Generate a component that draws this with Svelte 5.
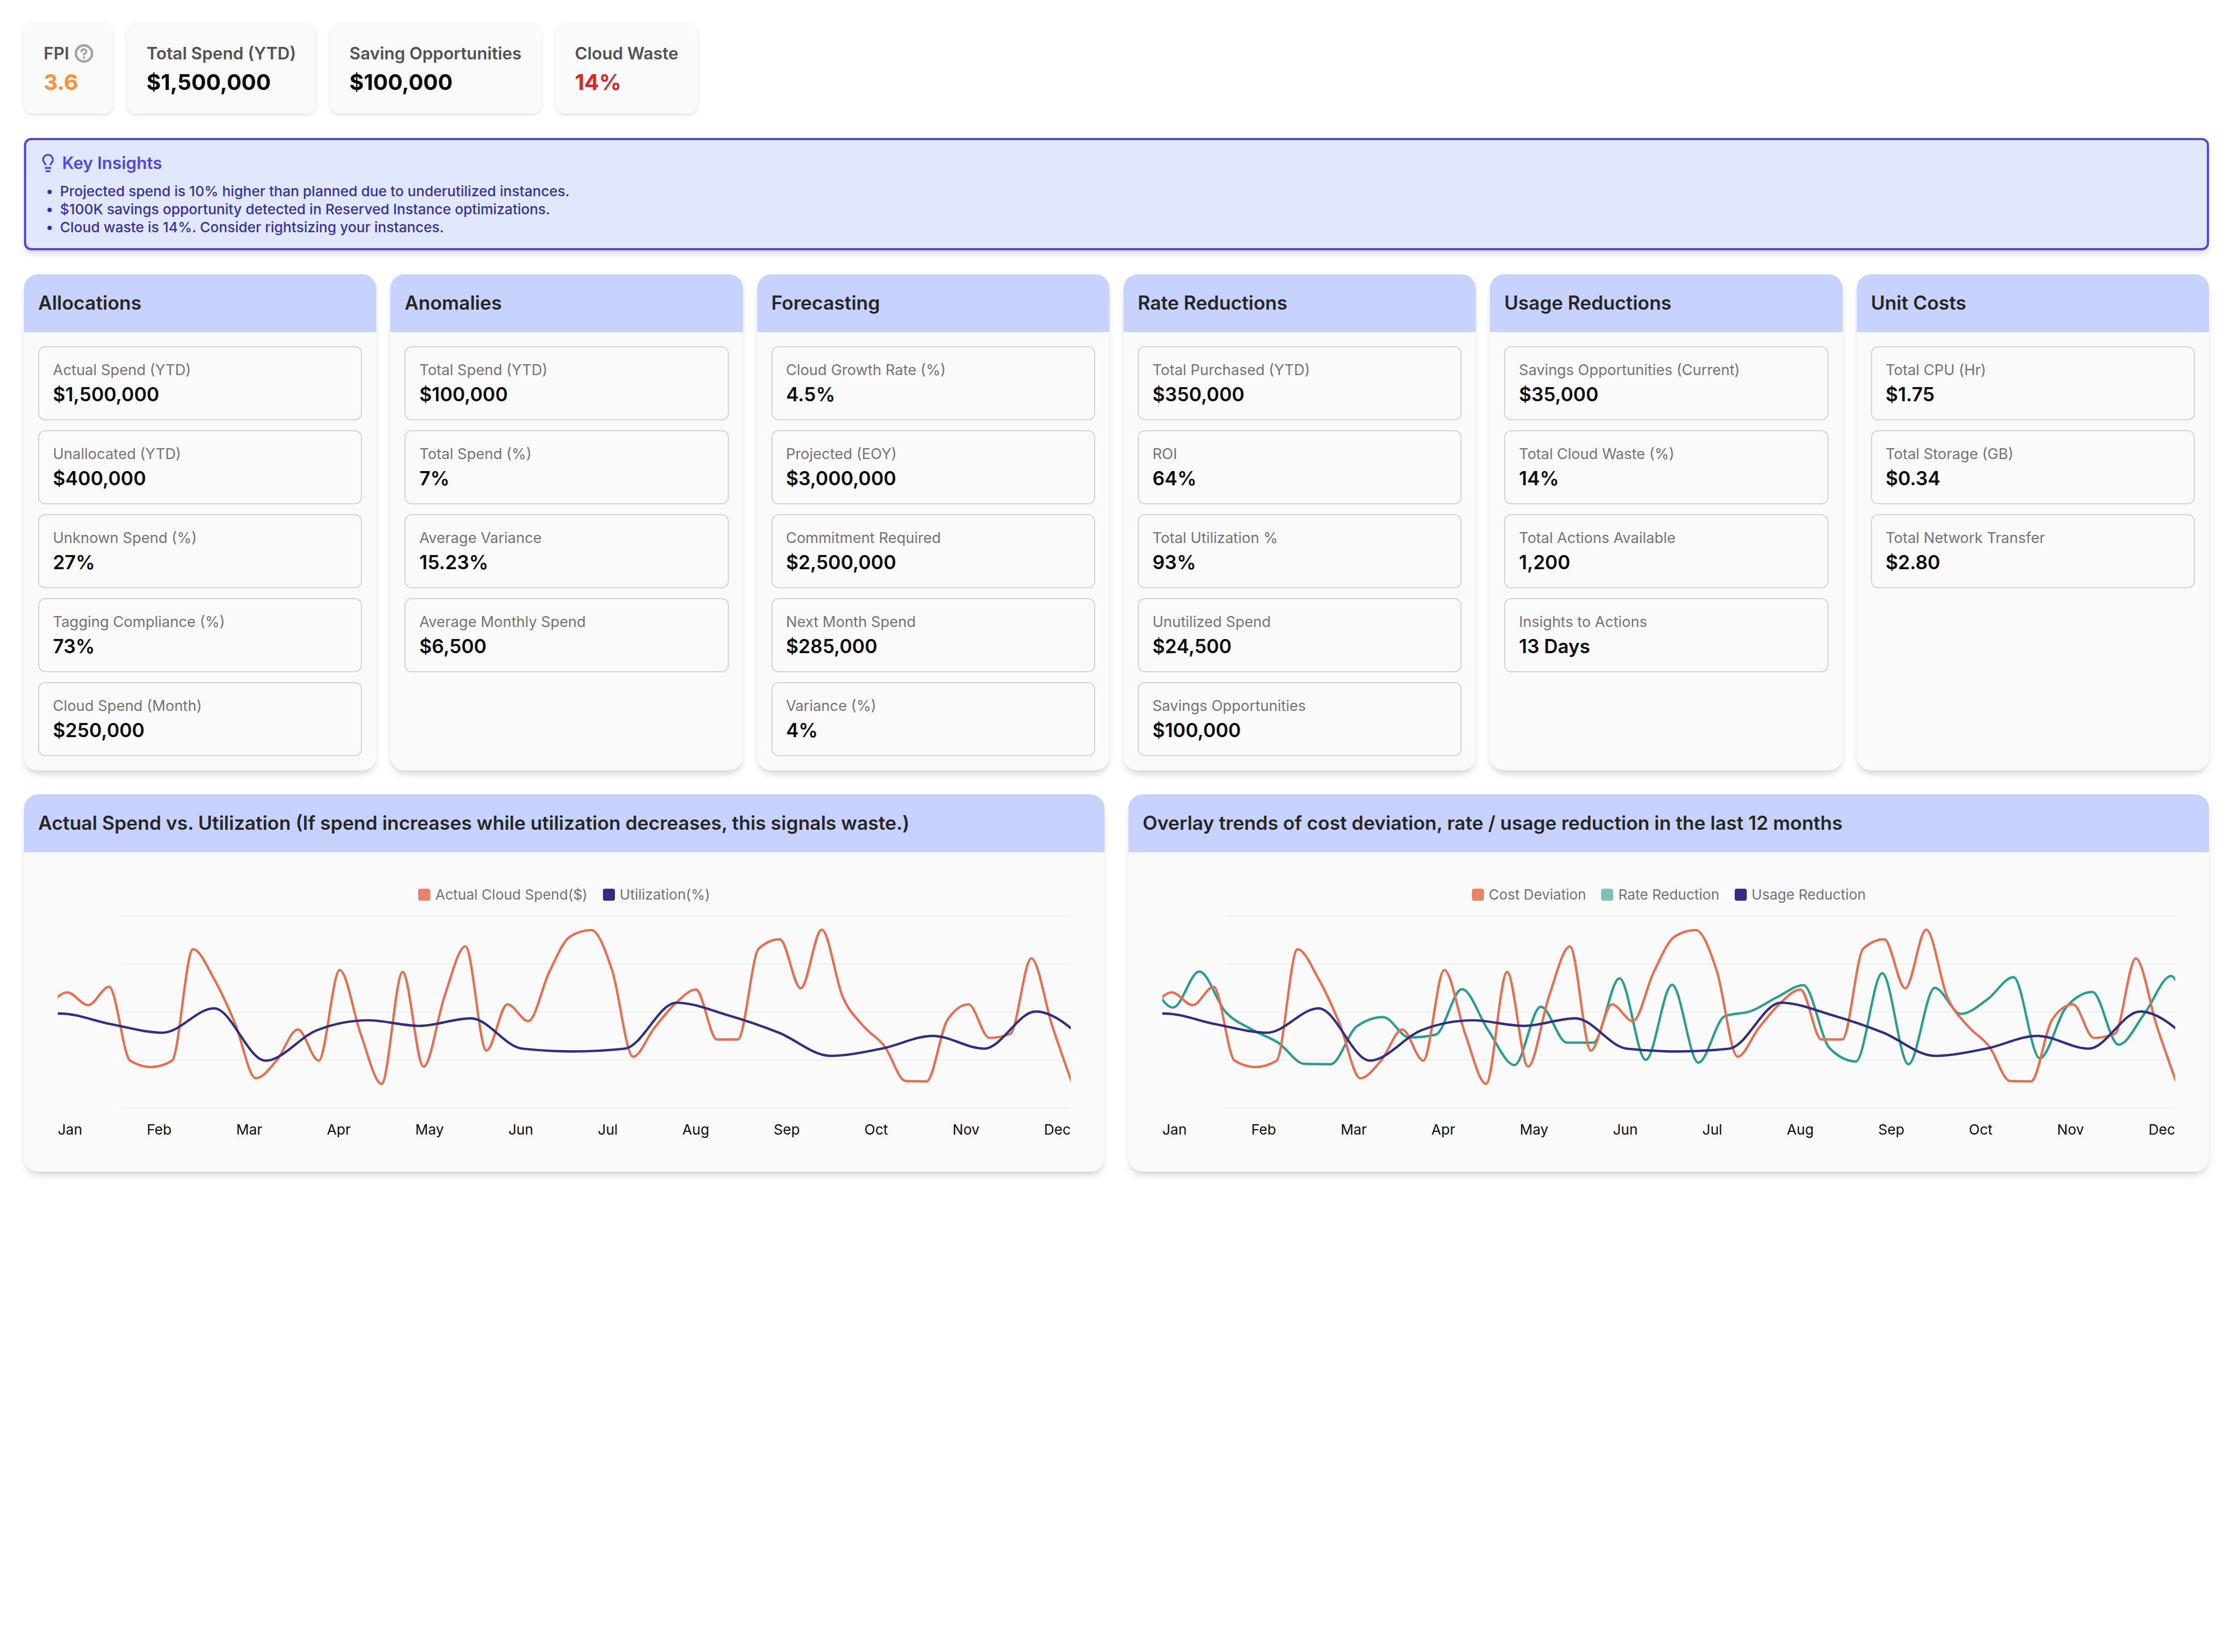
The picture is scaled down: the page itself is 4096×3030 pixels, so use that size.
<script lang="ts">
  const stats = [
    { label: 'FPI', value: '3.6', tone: 'warn', help: true },
    { label: 'Total Spend (YTD)', value: '$1,500,000', tone: '', help: false },
    { label: 'Saving Opportunities', value: '$100,000', tone: '', help: false },
    { label: 'Cloud Waste', value: '14%', tone: 'bad', help: false },
  ];

  const insights = [
    'Projected spend is 10% higher than planned due to underutilized instances.',
    '$100K savings opportunity detected in Reserved Instance optimizations.',
    'Cloud waste is 14%. Consider rightsizing your instances.',
  ];

  const groups = [
    {
      title: 'Allocations',
      items: [
        ['Actual Spend (YTD)', '$1,500,000'],
        ['Unallocated (YTD)', '$400,000'],
        ['Unknown Spend (%)', '27%'],
        ['Tagging Compliance (%)', '73%'],
        ['Cloud Spend (Month)', '$250,000'],
      ],
    },
    {
      title: 'Anomalies',
      items: [
        ['Total Spend (YTD)', '$100,000'],
        ['Total Spend (%)', '7%'],
        ['Average Variance', '15.23%'],
        ['Average Monthly Spend', '$6,500'],
      ],
    },
    {
      title: 'Forecasting',
      items: [
        ['Cloud Growth Rate (%)', '4.5%'],
        ['Projected (EOY)', '$3,000,000'],
        ['Commitment Required', '$2,500,000'],
        ['Next Month Spend', '$285,000'],
        ['Variance (%)', '4%'],
      ],
    },
    {
      title: 'Rate Reductions',
      items: [
        ['Total Purchased (YTD)', '$350,000'],
        ['ROI', '64%'],
        ['Total Utilization %', '93%'],
        ['Unutilized Spend', '$24,500'],
        ['Savings Opportunities', '$100,000'],
      ],
    },
    {
      title: 'Usage Reductions',
      items: [
        ['Savings Opportunities (Current)', '$35,000'],
        ['Total Cloud Waste (%)', '14%'],
        ['Total Actions Available', '1,200'],
        ['Insights to Actions', '13 Days'],
      ],
    },
    {
      title: 'Unit Costs',
      items: [
        ['Total CPU (Hr)', '$1.75'],
        ['Total Storage (GB)', '$0.34'],
        ['Total Network Transfer', '$2.80'],
      ],
    },
  ];

  const months = ['Jan', 'Feb', 'Mar', 'Apr', 'May', 'Jun', 'Jul', 'Aug', 'Sep', 'Oct', 'Nov', 'Dec'];

  type Series = { start: number; step: number; ys: number[] };

  const spend: Series = {
    start: -28.8,
    step: 52.51,
    ys: [
      236, 191, 223, 177, 362, 378, 362, 83, 157, 268, 406, 361, 284, 362, 135, 295, 420, 140, 377, 201, 76, 337,
      221, 263, 140, 51, 35, 136, 352, 281, 220, 184, 309, 309, 81, 58, 181, 34, 202, 276, 326, 413, 414, 260, 221,
      305, 295, 106, 275, 426,
    ],
  };
  const usage: Series = {
    start: -122.8,
    step: 128.64,
    ys: [
      256, 244, 271, 292, 231, 362, 286, 261, 275, 256, 332, 339, 332, 217, 248, 292, 350, 332, 300, 332, 239, 315,
    ],
  };
  const rate: Series = {
    start: -38.9,
    step: 65.81,
    ys: [
      137, 229, 139, 240, 284, 317, 370, 371, 276, 253, 304, 297, 183, 286, 373, 227, 317, 317, 156, 360, 172, 367,
      251, 238, 203, 173, 331, 364, 143, 371, 180, 245, 209, 153, 356, 229, 190, 322, 243, 150, 400,
    ],
  };

  const charts = [
    {
      title: 'Actual Spend vs. Utilization (If spend increases while utilization decreases, this signals waste.)',
      lines: [
        { name: 'Actual Cloud Spend($)', tone: 'orange', series: spend },
        { name: 'Utilization(%)', tone: 'navy', series: usage },
      ],
      order: [0, 1],
    },
    {
      title: 'Overlay trends of cost deviation, rate / usage reduction in the last 12 months',
      lines: [
        { name: 'Cost Deviation', tone: 'orange', series: spend },
        { name: 'Rate Reduction', tone: 'teal', series: rate },
        { name: 'Usage Reduction', tone: 'navy', series: usage },
      ],
      order: [1, 0, 2],
    },
  ];

  // Monotone cubic interpolation through evenly spaced points.
  function curve({ start, step, ys }: Series): string {
    const n = ys.length;
    const slope = ys.slice(1).map((y, i) => (y - ys[i]) / step);
    const tangent = ys.map((_, i) => {
      if (i === 0 || i === n - 1) return 0;
      const a = slope[i - 1];
      const b = slope[i];
      return (Math.sign(a) + Math.sign(b)) * Math.min(Math.abs(a), Math.abs(b), Math.abs(a + b) / 4);
    });
    tangent[0] = (3 * slope[0] - tangent[1]) / 2;
    tangent[n - 1] = (3 * slope[n - 2] - tangent[n - 2]) / 2;
    let d = `M${start},${ys[0]}`;
    for (let i = 1; i < n; i++) {
      const x0 = start + step * (i - 1);
      const x1 = x0 + step;
      const k = step / 3;
      d += `C${x0 + k},${ys[i - 1] + tangent[i - 1] * k} ${x1 - k},${ys[i] - tangent[i] * k} ${x1},${ys[i]}`;
    }
    return d;
  }
</script>

<main class="page">
  <section class="stats" aria-label="Summary">
    {#each stats as stat}
      <div class="stat">
        <div class="stat-label">
          <span>{stat.label}</span>
          {#if stat.help}
            <svg class="help" viewBox="0 0 46 46" aria-hidden="true">
              <circle cx="23" cy="23" r="20" stroke-width="6" />
              <path d="M16.8 18.2C17 14.8 19.6 12.8 23 12.8C26.6 12.8 29.2 15 29.2 18.2C29.2 22.6 24.6 22.4 22.8 25.6" stroke-width="5" />
              <path d="M23 33.2h.01" stroke-width="6" />
            </svg>
          {/if}
        </div>
        <div class="stat-value {stat.tone}">{stat.value}</div>
      </div>
    {/each}
  </section>

  <section class="insights">
    <h2 class="insights-title">
      <svg class="bulb" viewBox="0 0 24 24" aria-hidden="true">
        <path d="M15 14c.2-1 .7-1.7 1.5-2.5 1-.9 1.5-2.2 1.5-3.5A6 6 0 0 0 6 8c0 1 .2 2.2 1.5 3.5.7.7 1.3 1.5 1.5 2.5" />
        <path d="M9 18h6" />
        <path d="M10 22h4" />
      </svg>
      Key Insights
    </h2>
    <ul class="insights-list">
      {#each insights as line}
        <li>{line}</li>
      {/each}
    </ul>
  </section>

  <section class="groups">
    {#each groups as group}
      <article class="panel">
        <h2 class="panel-title">{group.title}</h2>
        <div class="panel-body metrics">
          {#each group.items as [label, value]}
            <div class="metric">
              <div class="metric-label">{label}</div>
              <div class="metric-value">{value}</div>
            </div>
          {/each}
        </div>
      </article>
    {/each}
  </section>

  <section class="charts">
    {#each charts as chart}
      <article class="panel">
        <h2 class="panel-title">{chart.title}</h2>
        <div class="panel-body chart">
          <div class="legend">
            {#each chart.lines as line}
              <span class="legend-item"><i class="swatch {line.tone}"></i>{line.name}</span>
            {/each}
          </div>
          <svg class="plot" viewBox="0 -3 2538 486" preserveAspectRatio="none" role="img" aria-label={chart.title}>
            {#each [0, 120, 240, 360, 480] as y}
              <line class="grid" x1="159" x2="2538" y1={y} y2={y} />
            {/each}
            {#each chart.order as i}
              <path class="line {chart.lines[i].tone}" d={curve(chart.lines[i].series)} />
            {/each}
          </svg>
          <div class="months">
            {#each months as month}
              <span>{month}</span>
            {/each}
          </div>
        </div>
      </article>
    {/each}
  </section>
</main>

<style>
  :global(body) {
    background: #fff;
  }

  .page {
    box-sizing: border-box;
    display: flex;
    flex-direction: column;
    gap: 44px;
    padding: 43px 44px 44px;
    font-family: Inter, 'Liberation Sans', sans-serif;
    color: #0a0a0a;
  }

  h2,
  ul {
    margin: 0;
    padding: 0;
  }

  .stats {
    display: flex;
    gap: 26px;
  }

  .stat {
    display: flex;
    flex-direction: column;
    gap: 6px;
    padding: 35px 36px 32px;
    border-radius: 18px;
    background: #fafafa;
    box-shadow: 0 2px 7px rgb(0 0 0 / 0.1), 0 2px 4px -2px rgb(0 0 0 / 0.1);
  }

  .stat-label {
    display: flex;
    align-items: center;
    gap: 10px;
    font-size: 31px;
    font-weight: 600;
    line-height: 40px;
    color: #525252;
  }

  .help {
    width: 34px;
    height: 34px;
    fill: none;
    stroke: #a3a3a3;
    stroke-linecap: round;
    stroke-linejoin: round;
  }

  .stat-value {
    font-size: 40px;
    font-weight: 700;
    line-height: 53px;
  }

  .warn {
    color: #fb923c;
  }

  .bad {
    color: #dc2626;
  }

  .insights {
    padding: 20px 22px 22px;
    border: 4px solid #4f46e5;
    border-radius: 13px;
    background: #e0e7ff;
    box-shadow: 0 9px 13px -2px rgb(0 0 0 / 0.13), 0 4px 9px -4px rgb(0 0 0 / 0.1);
  }

  .insights-title {
    display: flex;
    align-items: center;
    gap: 8px;
    font-size: 31px;
    font-weight: 600;
    line-height: 44px;
    color: #4f46e5;
  }

  .bulb {
    width: 36px;
    height: 36px;
    fill: none;
    stroke: currentColor;
    stroke-width: 2.2;
    stroke-linecap: round;
    stroke-linejoin: round;
  }

  .insights-list {
    margin-top: 13px;
    padding-left: 40px;
    font-size: 26px;
    font-weight: 500;
    line-height: 33px;
    color: #3730a3;
  }

  .groups {
    display: grid;
    grid-template-columns: repeat(6, minmax(0, 1fr));
    gap: 26px;
  }

  .charts {
    display: grid;
    grid-template-columns: repeat(2, minmax(0, 1fr));
    gap: 44px;
  }

  .panel {
    display: flex;
    flex-direction: column;
    border-radius: 26px;
    background: #fff;
    box-shadow: 0 9px 13px -2px rgb(0 0 0 / 0.13), 0 4px 9px -4px rgb(0 0 0 / 0.1);
  }

  .panel-title {
    padding: 25px 26px 27px;
    border-radius: 26px 26px 0 0;
    background: #c7d2fe;
    font-size: 35px;
    font-weight: 600;
    line-height: 54px;
    color: #262626;
  }

  .panel-body {
    flex: 1;
    border-radius: 0 0 26px 26px;
    background: #fafafa;
  }

  .metrics {
    display: flex;
    flex-direction: column;
    gap: 18px;
    padding: 26px;
    border-radius: 0 0 32px 32px;
  }

  .metric {
    padding: 24px 25px 18px;
    border: 2px solid #d4d4d4;
    border-radius: 13px;
  }

  .metric-label {
    font-size: 27px;
    line-height: 35px;
    color: #737373;
  }

  .metric-value {
    font-size: 35px;
    font-weight: 600;
    line-height: 55px;
  }

  .chart {
    padding: 60px 62px;
  }

  .legend {
    display: flex;
    justify-content: center;
    gap: 28px;
    font-size: 26px;
    line-height: 35px;
    color: #71717a;
  }

  .legend-item {
    display: flex;
    align-items: center;
    gap: 9px;
  }

  .swatch {
    width: 22px;
    height: 22px;
    border-radius: 4px;
  }

  .swatch.orange {
    background: #ea8268;
  }

  .swatch.teal {
    background: #7bc1b8;
  }

  .swatch.navy {
    background: #312e81;
  }

  .plot {
    display: block;
    width: 100%;
    height: 356px;
    margin: 20px 0;
  }

  .grid {
    stroke: #efeff0;
    stroke-width: 3;
  }

  .line {
    fill: none;
    stroke-width: 6;
    stroke-linejoin: round;
  }

  .line.orange {
    stroke: #e76f51;
  }

  .line.teal {
    stroke: #2a9d8f;
  }

  .line.navy {
    stroke: #312e81;
  }

  .months {
    display: flex;
    justify-content: space-between;
    font-size: 26px;
    line-height: 35px;
  }
</style>
